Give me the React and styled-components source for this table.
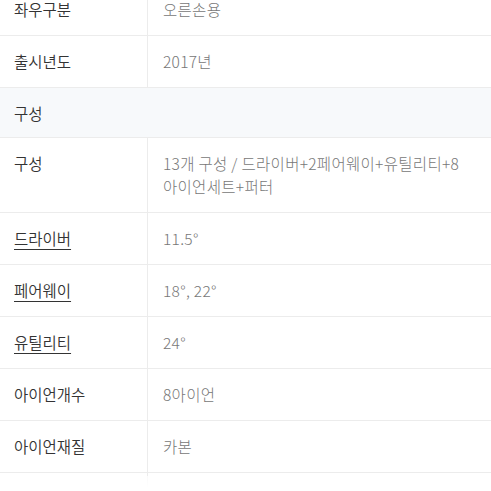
import React from 'react';
import styled, { createGlobalStyle } from 'styled-components';

const GlobalStyle = createGlobalStyle`
  html, body {
    margin: 0;
    padding: 0;
    background: #ffffff;
    overflow: hidden;
  }
  body {
    font-family: "Noto Sans CJK KR", "Noto Sans", sans-serif;
    -webkit-font-smoothing: antialiased;
  }
`;

const Wrapper = styled.div`
  position: relative;
  width: 491px;
  height: 491px;
  overflow: hidden;
`;

// page is scrolled a little, so the first row is cut at the top
const Table = styled.div`
  margin-top: -16px;
`;

const Row = styled.div`
  display: grid;
  grid-template-columns: 148px 1fr;
  border-bottom: 1px solid #ececec;
`;

const SectionRow = styled.div`
  background: #f7f9fb;
  border-bottom: 1px solid #ececec;
  padding: 13px 14px 12px;
  font-size: 15.5px;
  font-weight: 350;
  line-height: 24px;
  color: #333;
`;

const Label = styled.div`
  padding: 14px 14px;
  border-right: 1px solid #ececec;
  font-size: 15.5px;
  font-weight: 350;
  line-height: 23px;
  color: #333;
  word-break: keep-all;
  text-decoration: ${(p) => (p.$link ? 'underline' : 'none')};
  text-underline-offset: 4px;
  text-decoration-thickness: 1px;
`;

const Value = styled.div`
  padding: 14px 14px 14px 15px;
  font-size: 15.5px;
  font-weight: 300;
  letter-spacing: 0.3px;
  line-height: 23px;
  color: #777;
  word-break: keep-all;
`;

const Fade = styled.div`
  position: absolute;
  left: 0;
  right: 0;
  bottom: 0;
  height: 15px;
  background: linear-gradient(to bottom, rgba(255, 255, 255, 0.7), #ffffff 80%);
`;

const rows = [
  { label: '좌우구분', value: '오른손용' },
  { label: '출시년도', value: '2017년' },
  { section: '구성' },
  { label: '구성', value: '13개 구성 / 드라이버+2페어웨이+유틸리티+8 아이언세트+퍼터' },
  { label: '드라이버', value: '11.5°', link: true },
  { label: '페어웨이', value: '18°, 22°', link: true },
  { label: '유틸리티', value: '24°', link: true },
  { label: '아이언개수', value: '8아이언' },
  { label: '아이언재질', value: '카본' },
  { label: '웨지구성', value: '피칭웨지, 샌드웨지 포함 아이언세트' },
];

function App() {
  return (
    <Wrapper>
      <GlobalStyle />
      <Table>
        {rows.map((r, i) =>
          r.section ? (
            <SectionRow key={i}>{r.section}</SectionRow>
          ) : (
            <Row key={i}>
              <Label $link={r.link}>{r.label}</Label>
              <Value>{r.value}</Value>
            </Row>
          )
        )}
      </Table>
      <Fade />
    </Wrapper>
  );
}

export default App;
